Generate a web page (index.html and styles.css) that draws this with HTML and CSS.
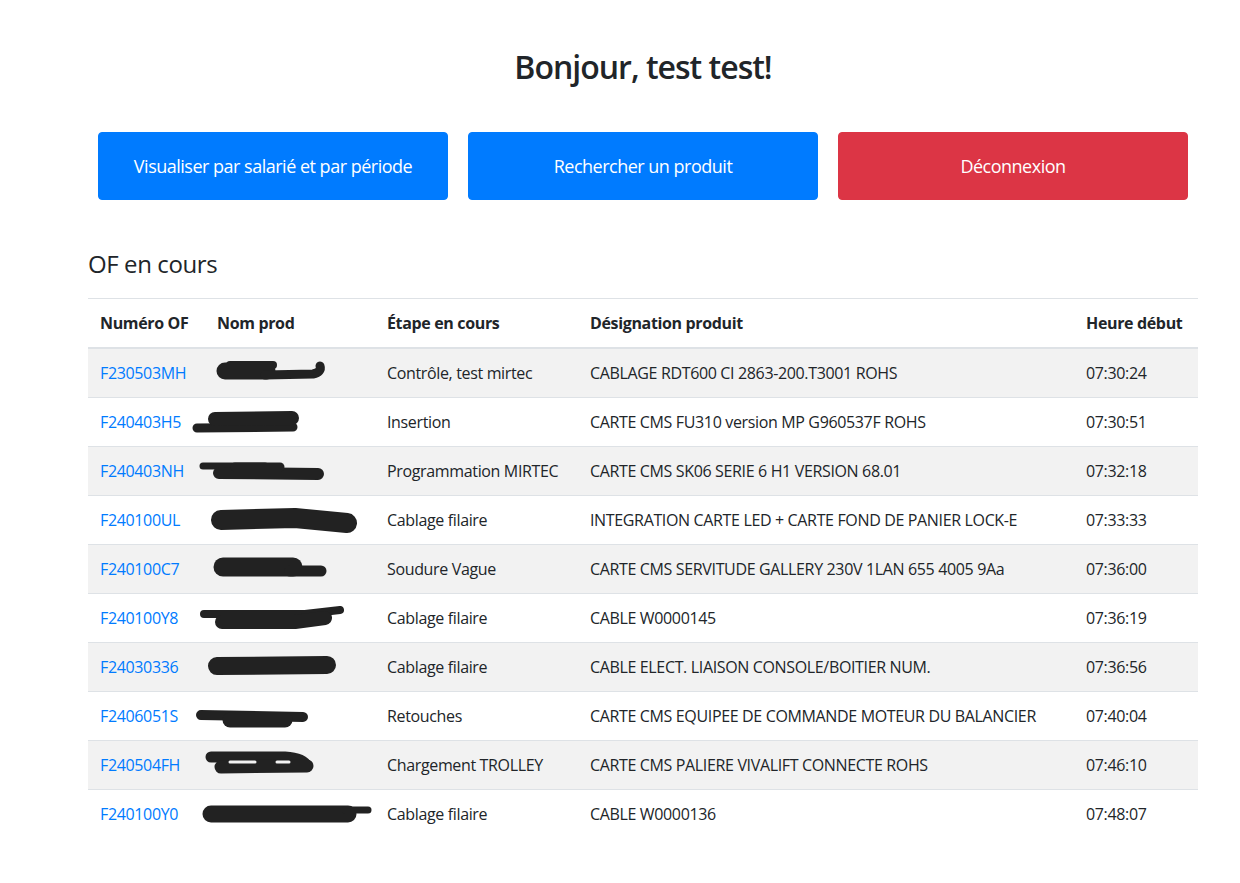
FILE: index.html
```html
<!DOCTYPE html>
<html lang="fr">
<head>
<meta charset="utf-8">
<title>Accueil</title>
<link rel="stylesheet" href="styles.css">
</head>
<body>
<div class="page">
  <h1 class="title">Bonjour, test test!</h1>
  <div class="actions">
    <a class="btn btn-primary" href="#">Visualiser par salarié et par période</a>
    <a class="btn btn-primary" href="#">Rechercher un produit</a>
    <a class="btn btn-danger" href="#">Déconnexion</a>
  </div>
  <h2 class="section-title">OF en cours</h2>
  <table class="table">
    <colgroup>
      <col class="c1"><col class="c2"><col class="c3"><col class="c4"><col class="c5">
    </colgroup>
    <thead>
      <tr><th>Numéro OF</th><th>Nom prod</th><th>Étape en cours</th><th>Désignation produit</th><th>Heure début</th></tr>
    </thead>
    <tbody>
      <tr>
        <td><a href="#">F230503MH</a></td>
        <td class="name"><svg class="redact" viewBox="0 0 200 48"><path d="M40,22 L82,22" stroke-width="17"/><path d="M45,16 L88,16" stroke-width="8"/><path d="M80,26 L128,25 Q137,23 135,17" stroke-width="9"/></svg></td>
        <td>Contrôle, test mirtec</td>
        <td>CABLAGE RDT600 CI 2863-200.T3001 ROHS</td>
        <td>07:30:24</td>
      </tr>
      <tr>
        <td><a href="#">F240403H5</a></td>
        <td class="name"><svg class="redact" viewBox="0 0 200 48"><path d="M12,30 L108,29" stroke-width="9"/><path d="M30,21 L107,20" stroke-width="14"/></svg></td>
        <td>Insertion</td>
        <td>CARTE CMS FU310 version MP G960537F ROHS</td>
        <td>07:30:51</td>
      </tr>
      <tr>
        <td><a href="#">F240403NH</a></td>
        <td class="name"><svg class="redact" viewBox="0 0 200 48"><path d="M18,19 L80,19" stroke-width="7"/><path d="M34,26 L133,27" stroke-width="12"/><path d="M50,20 L95,20" stroke-width="9"/></svg></td>
        <td>Programmation MIRTEC</td>
        <td>CARTE CMS SK06 SERIE 6 H1 VERSION 68.01</td>
        <td>07:32:18</td>
      </tr>
      <tr>
        <td><a href="#">F240100UL</a></td>
        <td class="name"><svg class="redact" viewBox="0 0 200 48"><path d="M36,24 L110,22 L162,27" stroke-width="20"/></svg></td>
        <td>Cablage filaire</td>
        <td>INTEGRATION CARTE LED + CARTE FOND DE PANIER LOCK-E</td>
        <td>07:33:33</td>
      </tr>
      <tr>
        <td><a href="#">F240100C7</a></td>
        <td class="name"><svg class="redact" viewBox="0 0 200 48"><path d="M38,22 L108,22" stroke-width="19"/><path d="M105,26 L136,26" stroke-width="11"/></svg></td>
        <td>Soudure Vague</td>
        <td>CARTE CMS SERVITUDE GALLERY 230V 1LAN 655 4005 9Aa</td>
        <td>07:36:00</td>
      </tr>
      <tr>
        <td><a href="#">F240100Y8</a></td>
        <td class="name"><svg class="redact" viewBox="0 0 200 48"><path d="M19,20 L120,20 L155,16" stroke-width="8"/><path d="M37,28 L110,28 L140,24" stroke-width="14"/></svg></td>
        <td>Cablage filaire</td>
        <td>CABLE W0000145</td>
        <td>07:36:19</td>
      </tr>
      <tr>
        <td><a href="#">F24030336</a></td>
        <td class="name"><svg class="redact" viewBox="0 0 200 48"><path d="M32,23 L142,22" stroke-width="18"/></svg></td>
        <td>Cablage filaire</td>
        <td>CABLE ELECT. LIAISON CONSOLE/BOITIER NUM.</td>
        <td>07:36:56</td>
      </tr>
      <tr>
        <td><a href="#">F2406051S</a></td>
        <td class="name"><svg class="redact" viewBox="0 0 200 48"><path d="M16,23 L118,25" stroke-width="10"/><path d="M45,28 L100,28" stroke-width="15"/></svg></td>
        <td>Retouches</td>
        <td>CARTE CMS EQUIPEE DE COMMANDE MOTEUR DU BALANCIER</td>
        <td>07:40:04</td>
      </tr>
      <tr>
        <td><a href="#">F240504FH</a></td>
        <td class="name"><svg class="redact" viewBox="0 0 200 48"><path d="M26,16 L100,16 Q118,17 122,25" stroke-width="11"/><path d="M36,26 L122,25" stroke-width="13"/><path d="M45,21 L70,21 M92,21 L104,21" stroke-width="3" stroke="#f2f2f2"/></svg></td>
        <td>Chargement TROLLEY</td>
        <td>CARTE CMS PALIERE VIVALIFT CONNECTE ROHS</td>
        <td>07:46:10</td>
      </tr>
      <tr>
        <td><a href="#">F240100Y0</a></td>
        <td class="name"><svg class="redact" viewBox="0 0 200 48"><path d="M26,24 L163,24" stroke-width="17"/><path d="M160,20 L183,20" stroke-width="7"/></svg></td>
        <td>Cablage filaire</td>
        <td>CABLE W0000136</td>
        <td>07:48:07</td>
      </tr>
    </tbody>
  </table>
</div>
</body>
</html>
```

FILE: styles.css
```css
* { box-sizing: border-box; }

body {
  margin: 0;
  background: #fff;
  color: #212529;
  font-family: "Open Sans", "Noto Sans", sans-serif;
  font-size: 16px;
  line-height: 1.5;
  letter-spacing: -0.35px;
}

.page {
  width: 1110px;
  margin-left: 88px;
  padding-top: 48px;
  padding-bottom: 40px;
}

.title {
  margin: 0 0 46px;
  text-align: center;
  font-size: 32px;
  font-weight: 600;
  line-height: 38px;
  letter-spacing: -1px;
}

.actions {
  display: grid;
  grid-template-columns: repeat(3, 1fr);
  gap: 20px;
  padding: 0 10px;
}

.btn {
  display: block;
  padding: 20px 12px;
  border: 1px solid transparent;
  border-radius: 4px;
  color: #fff;
  text-align: center;
  text-decoration: none;
  font-size: 18px;
  line-height: 26px;
  letter-spacing: -0.5px;
}

.btn-primary { background: #007bff; border-color: #007bff; }
.btn-danger { background: #dc3545; border-color: #dc3545; }

.section-title {
  margin: 49px 0 20px;
  font-size: 24px;
  font-weight: 500;
  line-height: 29px;
  letter-spacing: -0.4px;
}

.table {
  width: 100%;
  border-collapse: collapse;
  table-layout: fixed;
}

.c1 { width: 117px; }
.c2 { width: 170px; }
.c3 { width: 203px; }
.c4 { width: 496px; }
.c5 { width: 124px; }

.table th,
.table td {
  padding: 12px;
  text-align: left;
  vertical-align: top;
  border-top: 1px solid #dee2e6;
  white-space: nowrap;
  overflow: visible;
}

.table th {
  font-weight: 700;
  border-bottom: 2px solid #dee2e6;
}

.table tbody tr:nth-child(odd) { background: #f2f2f2; }

.table a {
  color: #007bff;
  text-decoration: none;
}

.name { position: relative; }

.redact {
  position: absolute;
  left: -20px;
  top: 0;
  width: 200px;
  height: 48px;
  fill: none;
  stroke: #222;
  stroke-linecap: round;
  stroke-linejoin: round;
}
```
